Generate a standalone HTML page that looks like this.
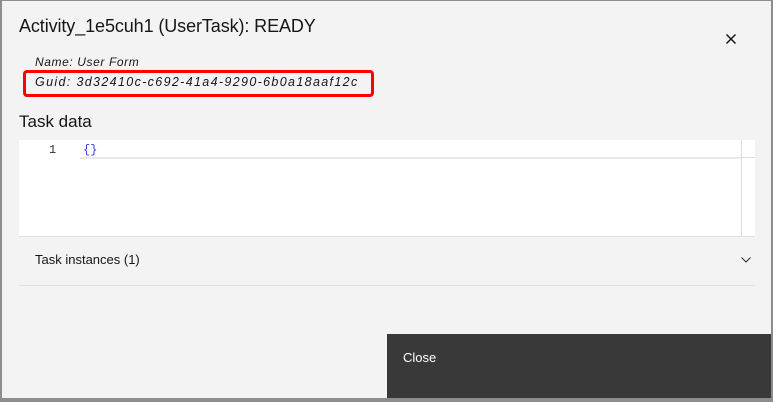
<!DOCTYPE html>
<html><head><style>
body{margin:0;width:773px;height:402px;background:#8d8d8d;font-family:"Liberation Sans",sans-serif;overflow:hidden;position:relative}
.m{position:absolute;left:2px;top:1px;width:769px;height:397px;background:#f3f3f3}
.a{position:absolute}
</style></head><body>
<div class="m"></div>
<div class="a" style="left:19px;top:16px;font-size:18px;color:#161616;letter-spacing:-0.1px">Activity_1e5cuh1 (UserTask): READY</div>
<svg class="a" style="left:725px;top:33px" width="12" height="12"><path d="M1.5 1.5L10.5 10.5M10.5 1.5L1.5 10.5" stroke="#161616" stroke-width="1.5"/></svg>
<div class="a" style="left:35px;top:55px;font-size:12px;font-style:italic;color:#161616;letter-spacing:0.6px">Name: User Form</div>
<div class="a" style="left:23px;top:70px;width:351px;height:27px;border:3px solid #f00;border-radius:4px;box-sizing:border-box"></div>
<div class="a" style="left:35px;top:75px;font-size:12.5px;font-style:italic;color:#161616;letter-spacing:1.35px">Guid: 3d32410c-c692-41a4-9290-6b0a18aaf12c</div>
<div class="a" style="left:19px;top:112px;font-size:17px;color:#161616">Task data</div>
<div class="a" style="left:19px;top:140px;width:736px;height:96px;background:#fff;border-bottom:1px solid #e0e0e0"></div>
<div class="a" style="left:80px;top:157px;width:661px;height:2px;background:#e8e8e8"></div>
<div class="a" style="left:741px;top:140px;width:1px;height:96px;background:#ddd"></div>
<div class="a" style="left:741px;top:157px;width:14px;height:1px;background:#ddd"></div>
<div class="a" style="left:49px;top:143px;font-family:'Liberation Mono',monospace;font-size:12px;color:#333">1</div>
<div class="a" style="left:83px;top:143px;font-family:'Liberation Mono',monospace;font-size:12px;color:#3b3bd6">{}</div>
<div class="a" style="left:35px;top:252px;font-size:13px;color:#161616">Task instances (1)</div>
<svg class="a" style="left:741px;top:257px" width="10" height="6"><path d="M0.5 0.5L5 5L9.5 0.5" stroke="#333" stroke-width="1.1" fill="none"/></svg>
<div class="a" style="left:19px;top:285px;width:736px;height:1px;background:#e0e0e0"></div>
<div class="a" style="left:387px;top:334px;width:384px;height:64px;background:#393939"></div>
<div class="a" style="left:403px;top:350px;font-size:13px;color:#fff">Close</div>
</body></html>
